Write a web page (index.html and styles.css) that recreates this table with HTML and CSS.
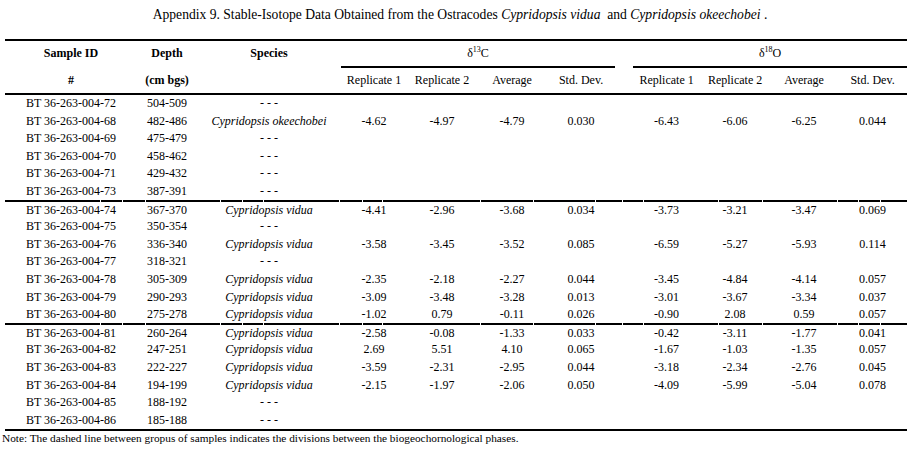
FILE: index.html
```html
<!DOCTYPE html>
<html>
<head>
<meta charset="utf-8">
<link rel="stylesheet" href="styles.css">
</head>
<body>
<p class="title">Appendix 9. Stable-Isotope Data Obtained from the Ostracodes <i>Cypridopsis vidua</i>&nbsp; and <i>Cypridopsis okeechobei</i> .</p>
<table class="data">
  <colgroup>
    <col class="c-id"><col class="c-depth"><col class="c-species">
    <col class="c-r1"><col class="c-r2"><col class="c-avg"><col class="c-sd">
    <col class="c-gap">
    <col class="c-r1b"><col class="c-r2b"><col class="c-avgb"><col class="c-sdb">
  </colgroup>
  <thead>
    <tr class="h1">
      <th class="b">Sample ID</th><th class="b">Depth</th><th class="b">Species</th>
      <th colspan="4" class="iso">&delta;<sup>13</sup>C</th>
      <th></th>
      <th colspan="4" class="iso">&delta;<sup>18</sup>O</th>
    </tr>
    <tr class="h2">
      <th class="b">#</th><th class="b">(cm bgs)</th><th></th>
      <th>Replicate 1</th><th>Replicate 2</th><th>Average</th><th>Std. Dev.</th>
      <th></th>
      <th>Replicate 1</th><th>Replicate 2</th><th>Average</th><th>Std. Dev.</th>
    </tr>
  </thead>
  <tbody>
    <tr><td>BT 36-263-004-72</td><td>504-509</td><td>- - -</td></tr>
    <tr><td>BT 36-263-004-68</td><td>482-486</td><td class="sp">Cypridopsis okeechobei</td><td>-4.62</td><td>-4.97</td><td>-4.79</td><td>0.030</td><td></td><td>-6.43</td><td>-6.06</td><td>-6.25</td><td>0.044</td></tr>
    <tr><td>BT 36-263-004-69</td><td>475-479</td><td>- - -</td></tr>
    <tr><td>BT 36-263-004-70</td><td>458-462</td><td>- - -</td></tr>
    <tr><td>BT 36-263-004-71</td><td>429-432</td><td>- - -</td></tr>
    <tr class="end"><td>BT 36-263-004-73</td><td>387-391</td><td>- - -</td></tr>
    <tr class="sep"><td colspan="12"></td></tr>
    <tr class="start"><td>BT 36-263-004-74</td><td>367-370</td><td class="sp">Cypridopsis vidua</td><td>-4.41</td><td>-2.96</td><td>-3.68</td><td>0.034</td><td></td><td>-3.73</td><td>-3.21</td><td>-3.47</td><td>0.069</td></tr>
    <tr><td>BT 36-263-004-75</td><td>350-354</td><td>- - -</td></tr>
    <tr><td>BT 36-263-004-76</td><td>336-340</td><td class="sp">Cypridopsis vidua</td><td>-3.58</td><td>-3.45</td><td>-3.52</td><td>0.085</td><td></td><td>-6.59</td><td>-5.27</td><td>-5.93</td><td>0.114</td></tr>
    <tr><td>BT 36-263-004-77</td><td>318-321</td><td>- - -</td></tr>
    <tr><td>BT 36-263-004-78</td><td>305-309</td><td class="sp">Cypridopsis vidua</td><td>-2.35</td><td>-2.18</td><td>-2.27</td><td>0.044</td><td></td><td>-3.45</td><td>-4.84</td><td>-4.14</td><td>0.057</td></tr>
    <tr><td>BT 36-263-004-79</td><td>290-293</td><td class="sp">Cypridopsis vidua</td><td>-3.09</td><td>-3.48</td><td>-3.28</td><td>0.013</td><td></td><td>-3.01</td><td>-3.67</td><td>-3.34</td><td>0.037</td></tr>
    <tr class="end"><td>BT 36-263-004-80</td><td>275-278</td><td class="sp">Cypridopsis vidua</td><td>-1.02</td><td>0.79</td><td>-0.11</td><td>0.026</td><td></td><td>-0.90</td><td>2.08</td><td>0.59</td><td>0.057</td></tr>
    <tr class="sep"><td colspan="12"></td></tr>
    <tr class="start"><td>BT 36-263-004-81</td><td>260-264</td><td class="sp">Cypridopsis vidua</td><td>-2.58</td><td>-0.08</td><td>-1.33</td><td>0.033</td><td></td><td>-0.42</td><td>-3.11</td><td>-1.77</td><td>0.041</td></tr>
    <tr><td>BT 36-263-004-82</td><td>247-251</td><td class="sp">Cypridopsis vidua</td><td>2.69</td><td>5.51</td><td>4.10</td><td>0.065</td><td></td><td>-1.67</td><td>-1.03</td><td>-1.35</td><td>0.057</td></tr>
    <tr><td>BT 36-263-004-83</td><td>222-227</td><td class="sp">Cypridopsis vidua</td><td>-3.59</td><td>-2.31</td><td>-2.95</td><td>0.044</td><td></td><td>-3.18</td><td>-2.34</td><td>-2.76</td><td>0.045</td></tr>
    <tr><td>BT 36-263-004-84</td><td>194-199</td><td class="sp">Cypridopsis vidua</td><td>-2.15</td><td>-1.97</td><td>-2.06</td><td>0.050</td><td></td><td>-4.09</td><td>-5.99</td><td>-5.04</td><td>0.078</td></tr>
    <tr><td>BT 36-263-004-85</td><td>188-192</td><td>- - -</td></tr>
    <tr><td>BT 36-263-004-86</td><td>185-188</td><td>- - -</td></tr>
  </tbody>
</table>
<p class="note">Note: The dashed line between gropus of samples indicates the divisions between the biogeochornological phases.</p>
</body>
</html>
```
FILE: styles.css
```css
html, body {
  margin: 0;
  padding: 0;
  background: #fff;
  color: #000;
  font-family: "Liberation Serif", "Times New Roman", serif;
}

.title {
  margin: 0;
  padding: 7px 0 0 7px;
  height: 32px;
  box-sizing: border-box;
  font-size: 13.6px;
  line-height: 16px;
  text-align: center;
}

.data {
  margin-left: 5px;
  margin-top: 7px;
  width: 902px;
  table-layout: fixed;
  border-collapse: separate;
  border-spacing: 0;
  border-bottom: 2px solid #000;
  font-size: 12px;
}

.c-id { width: 132px; }
.c-depth { width: 60px; }
.c-species { width: 144px; }
.c-r1 { width: 66px; }
.c-r2 { width: 70px; }
.c-avg { width: 70px; }
.c-sd { width: 68px; }
.c-gap { width: 18px; }
.c-r1b { width: 67px; }
.c-r2b { width: 70px; }
.c-avgb { width: 68px; }
.c-sdb { width: 69px; }

.data th,
.data td {
  padding: 0;
  text-align: center;
  vertical-align: top;
  white-space: nowrap;
  font-weight: normal;
}

.data th.b {
  font-weight: bold;
}

.h1 th {
  border-top: 2px solid #000;
  line-height: 25px;
}

.h1 th.iso {
  border-bottom: 2px solid #000;
}

.h2 th {
  line-height: 25px;
  border-bottom: 2px solid #000;
}

.iso sup {
  font-size: 8px;
  line-height: 0;
  vertical-align: 5px;
}

.data tbody td {
  line-height: 17.6px;
}

.data tbody tr.end td,
.data tbody tr.start td {
  line-height: 16.6px;
}

.data td.sp {
  font-style: italic;
}

.data tr.sep td {
  height: 2px;
  line-height: 0;
  font-size: 0;
  background: linear-gradient(90deg,
    #000 0 95px, #fff 95px 96px, #000 96px 117px, #fff 117px 118px,
    #000 118px 140px, #fff 140px 141px, #000 141px 215px, #fff 215px 216px,
    #000 216px 237px, #fff 237px 238px, #000 238px 258px, #fff 258px 259px,
    #000 259px 334px, #fff 334px 335px, #000 335px 357px, #fff 357px 358px,
    #000 358px 377px, #fff 377px 378px, #000 378px 475px, #fff 475px 476px,
    #000 476px 528px, #fff 528px 529px, #000 529px 590px, #fff 590px 591px,
    #000 591px 617px, #fff 617px 618px, #000 618px 638px, #fff 638px 639px,
    #000 639px 713px, #fff 713px 714px, #000 714px 757px, #fff 757px 758px,
    #000 758px 832px, #fff 832px 833px, #000 833px 853px, #fff 853px 854px,
    #000 854px 875px, #fff 875px 876px, #000 876px);
}

.note {
  margin: 0;
  padding-left: 2px;
  font-size: 11.3px;
  line-height: 14px;
}
```
